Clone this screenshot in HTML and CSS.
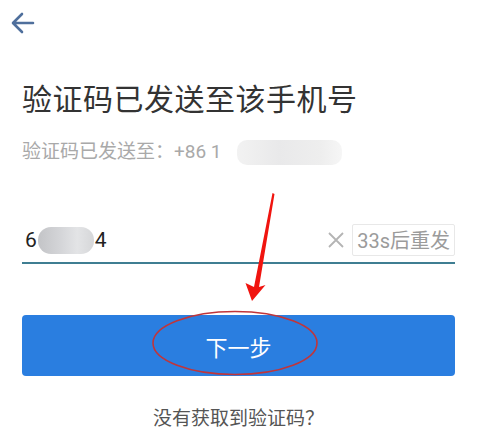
FILE: index.html
```html
<!DOCTYPE html>
<html lang="zh-CN">
<head>
  <meta charset="UTF-8">
  <title>输入验证码</title>
  <link rel="stylesheet" href="styles.css">
</head>
<body>

<div class="page">
  <div class="top-bar">
    <svg class="back" width="24" height="22" viewBox="0 0 24 22">
      <path d="M22 11H3M11 2L2 11l9 9" fill="none" stroke="#4f6f9c" stroke-width="2.6" stroke-linecap="round" stroke-linejoin="round"/>
    </svg>
  </div>

  <h1 class="title">验证码已发送至该手机号</h1>
  <p class="sub">验证码已发送至：+86 1<span class="mask mask-phone"></span></p>

  <div class="code-row">
    <div class="code">6<span class="mask mask-code"></span>4</div>
    <svg class="clear" width="18" height="18" viewBox="0 0 18 18">
      <path d="M2 2l14 14M16 2L2 16" stroke="#b4b4b4" stroke-width="1.8"/>
    </svg>
    <span class="resend">33s后重发</span>
  </div>

  <button class="next">下一步</button>

  <p class="help">没有获取到验证码？</p>

  <!-- annotation drawn on top of the screenshot -->
  <svg class="marks" width="500" height="442" viewBox="0 0 500 442">
    <polygon points="272.5,193 274.5,194 259,287 265.5,285 252,301 245.5,283 254,287" fill="#f0140f"/>
    <ellipse cx="235" cy="343" rx="82" ry="31.5" fill="none" stroke="#c0353a" stroke-width="1.6"/>
  </svg>
</div>

</body>
</html>
```

FILE: styles.css
```css
body {
  margin: 0;
  background: #fff;
  font-family: Roboto, "Noto Sans CJK SC", sans-serif;
}
.page {
  position: relative;
  width: 500px;
  height: 442px;
  padding: 0 45px 0 22px;
  box-sizing: border-box;
  overflow: hidden;
}
.top-bar {
  height: 36px;
  padding-top: 12px;
  margin-left: -11px;
  box-sizing: border-box;
}
.back {
  display: block;
}
.title {
  margin: 44px 0 0;
  font-size: 30px;
  line-height: 40px;
  font-weight: normal;
  color: #333;
  letter-spacing: 0.5px;
}
.sub {
  margin: 19px 0 0;
  font-size: 19px;
  line-height: 26px;
  color: #a9a9a9;
  display: flex;
  align-items: center;
}
.mask {
  display: inline-block;
  border-radius: 10px;
}
.mask-phone {
  width: 105px;
  height: 25px;
  margin-left: 15px;
  background: linear-gradient(90deg, #f2f2f2, #e9e9ea 40%, #eeeeee 80%, #f6f6f6);
}
.code-row {
  margin-top: 59px;
  display: flex;
  align-items: center;
  height: 32px;
  padding-bottom: 6px;
  border-bottom: 2px solid #3f7e92;
}
.code {
  flex: 1;
  display: flex;
  align-items: center;
  padding-left: 3px;
  font-size: 21px;
  color: #222;
}
.mask-code {
  width: 56px;
  height: 27px;
  margin: 0 1px;
  border-radius: 13px;
  background: linear-gradient(90deg, #c3c4c7, #d4d5d8 40%, #e3e4e6 70%, #d6d7d9);
}
.clear {
  margin-right: 7px;
}
.resend {
  height: 32px;
  line-height: 32px;
  padding: 0 4px;
  border: 1px solid #e8e8e8;
  border-radius: 2px;
  font-size: 20px;
  color: #9b9b9b;
  box-sizing: border-box;
}
.next {
  display: block;
  width: 100%;
  height: 61px;
  margin-top: 51px;
  border: none;
  border-radius: 4px;
  background: #2a7ee0;
  color: #fff;
  font-family: inherit;
  font-size: 22px;
}
.help {
  margin: 30px 0 0;
  text-align: center;
  font-size: 19px;
  line-height: 26px;
  color: #555;
}
.marks {
  position: absolute;
  left: 0;
  top: 0;
  pointer-events: none;
}
```
